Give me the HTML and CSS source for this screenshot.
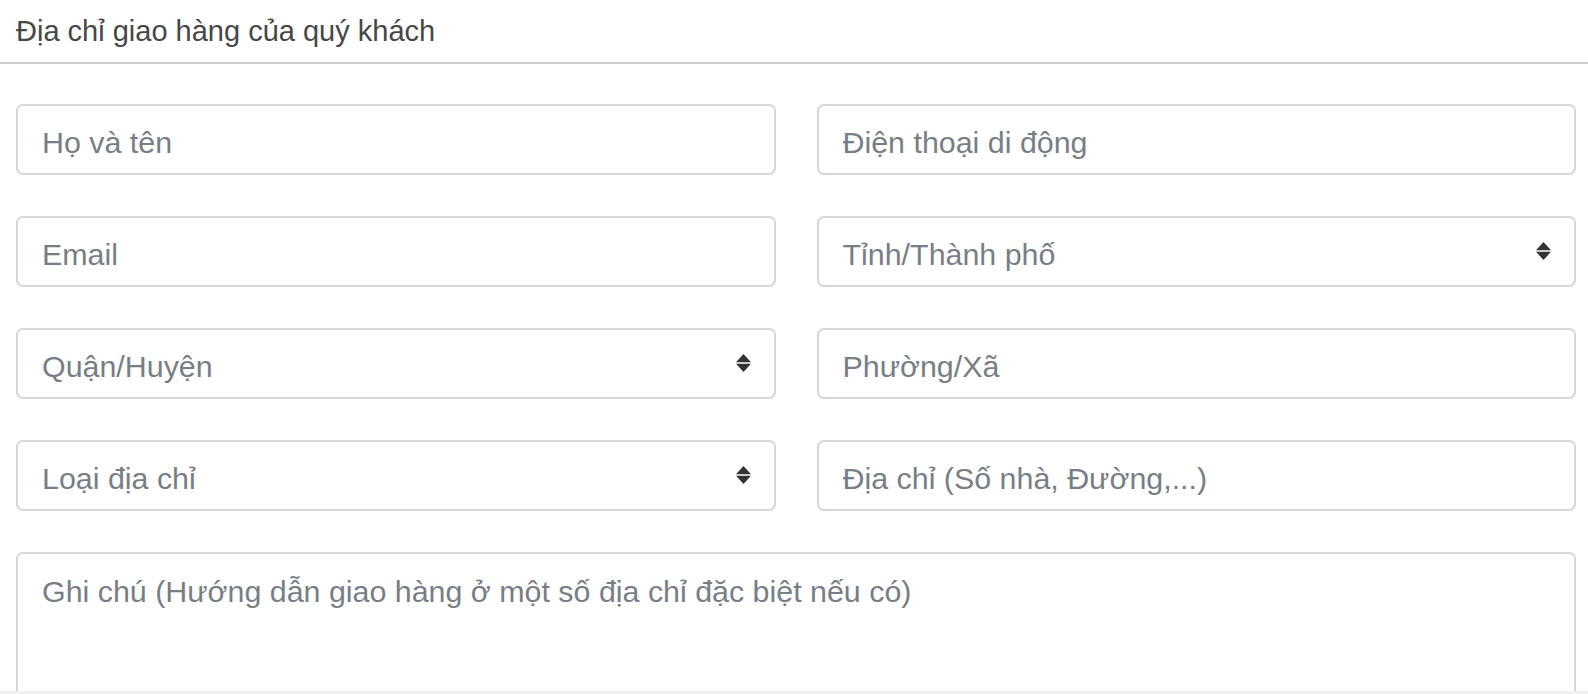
FILE: index.html
```html
<!DOCTYPE html>
<html lang="vi">
<head>
<meta charset="utf-8">
<title>Địa chỉ giao hàng</title>
<link rel="stylesheet" href="styles.css">
</head>
<body>
<div class="panel">
  <div class="panel-head">Địa chỉ giao hàng của quý khách</div>
  <form class="form-grid">
    <input class="field" type="text" placeholder="Họ và tên">
    <input class="field" type="text" placeholder="Điện thoại di động">
    <input class="field" type="email" placeholder="Email">
    <div class="select-wrap">
      <select class="field select"><option>Tỉnh/Thành phố</option></select>
      <svg class="arrows" viewBox="0 0 15 18" width="15" height="18"><polygon points="7.5,0 15,8.2 0,8.2"/><polygon points="0,9.8 15,9.8 7.5,18"/></svg>
    </div>
    <div class="select-wrap">
      <select class="field select"><option>Quận/Huyện</option></select>
      <svg class="arrows" viewBox="0 0 15 18" width="15" height="18"><polygon points="7.5,0 15,8.2 0,8.2"/><polygon points="0,9.8 15,9.8 7.5,18"/></svg>
    </div>
    <input class="field" type="text" placeholder="Phường/Xã">
    <div class="select-wrap">
      <select class="field select"><option>Loại địa chỉ</option></select>
      <svg class="arrows" viewBox="0 0 15 18" width="15" height="18"><polygon points="7.5,0 15,8.2 0,8.2"/><polygon points="0,9.8 15,9.8 7.5,18"/></svg>
    </div>
    <input class="field" type="text" placeholder="Địa chỉ (Số nhà, Đường,...)">
    <textarea class="field note" placeholder="Ghi chú (Hướng dẫn giao hàng ở một số địa chỉ đặc biệt nếu có)"></textarea>
  </form>
</div>
</body>
</html>
```

FILE: styles.css
```css
* { box-sizing: border-box; }

html, body {
  margin: 0;
  padding: 0;
  background: #f0f0f0;
  font-family: "Liberation Sans", Arial, Helvetica, sans-serif;
}

.panel {
  background: #ffffff;
  height: 691px;
  overflow: hidden;
}

.panel-head {
  height: 64px;
  padding: 10px 16px 0;
  font-size: 29px;
  line-height: 42px;
  color: #474747;
  border-bottom: 2px solid #cdcdcd;
}

.form-grid {
  display: grid;
  grid-template-columns: 1fr 1fr;
  gap: 41px;
  padding: 40px 12px 0 16px;
  margin: 0;
}

.field {
  display: block;
  width: 100%;
  height: 71px;
  margin: 0;
  padding: 5px 24px 0;
  border: 2px solid #d3d7dc;
  border-radius: 7px;
  background: #ffffff;
  font-family: inherit;
  font-size: 30.4px;
  color: #495057;
  outline: none;
}

.field::placeholder {
  color: #777e85;
  opacity: 1;
}

.select-wrap {
  position: relative;
}

.select {
  appearance: none;
  -webkit-appearance: none;
  color: #777e85;
  padding-right: 60px;
}

.arrows {
  position: absolute;
  right: 25px;
  top: 26px;
  fill: #333333;
  pointer-events: none;
}

.note {
  grid-column: 1 / -1;
  height: 300px;
  padding: 15px 24px;
  line-height: 1.5;
  resize: none;
}
```
